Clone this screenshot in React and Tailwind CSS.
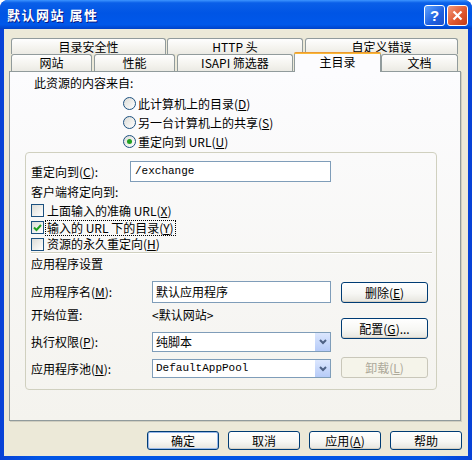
import React from 'react';

function Mn({ children }) {
  // mnemonic letter with underline
  return <span className="underline underline-offset-[1px]">{children}</span>;
}

function XpButton({ children, className = '', disabled }) {
  return (
    <div
      className={`flex items-center justify-center rounded-[3px] border text-[12px] leading-none ${
        disabled
          ? 'border-[#C9C7BA] text-[#ACA899] bg-[#F5F4EA]'
          : 'border-[#003C74] text-black bg-[linear-gradient(180deg,#ffffff_0%,#f7f7f4_55%,#e6e5de_100%)] shadow-[inset_0_-1px_0_#d6d0c5]'
      } ${className}`}
    >
      {children}
    </div>
  );
}

function Radio({ checked, children }) {
  return (
    <div className="flex items-center h-[19px]">
      <span className="w-[13px] h-[13px] rounded-full border border-[#1C5180] bg-[linear-gradient(135deg,#dcdcd7,#ffffff)] flex items-center justify-center">
        {checked && <span className="w-[5px] h-[5px] rounded-full bg-[#21A121]" />}
      </span>
      <span className="ml-[2px]">{children}</span>
    </div>
  );
}

function Check({ checked, focus, children, h = 'h-[17px]' }) {
  return (
    <div className={`flex items-center ${h}`}>
      <span className="w-[13px] h-[13px] border border-[#1C5180] bg-[linear-gradient(135deg,#dcdcd7,#ffffff)] flex items-center justify-center">
        {checked && (
          <svg width="9" height="9" viewBox="0 0 9 9">
            <path d="M1 4.5 L3.5 7 L8 2" fill="none" stroke="#21A121" strokeWidth="2" />
          </svg>
        )}
      </span>
      <span className={`ml-[1px] px-[1px] leading-[14px] border ${focus ? 'border-dotted border-black' : 'border-transparent'}`}>
        {children}
      </span>
    </div>
  );
}

function Select({ children, mono, h = 'h-[19px]' }) {
  return (
    <div className={`w-[179px] ${h} border border-[#7F9DB9] bg-white flex items-center justify-between pl-[3px] pr-[0px]`}>
      <span className={mono ? "font-['Liberation_Mono',monospace] text-[11px]" : ''}>{children}</span>
      <span className="w-[16px] h-full border-l border-white bg-[linear-gradient(180deg,#dce7fe,#b6cbf8)] flex items-center justify-center">
        <svg width="8" height="6" viewBox="0 0 8 6">
          <path d="M1 1 L4 4 L7 1" fill="none" stroke="#4D6185" strokeWidth="2" />
        </svg>
      </span>
    </div>
  );
}

function Tab({ children, w, className = '' }) {
  return (
    <div
      className={`${w} h-full border border-b-0 border-[#919B9C] rounded-t-[3px] bg-[linear-gradient(180deg,#fefefe_0%,#f4f3ee_60%,#ebeae4_100%)] flex items-center justify-center text-[12px] leading-none ${className}`}
    >
      {children}
    </div>
  );
}

export default function App() {
  return (
    <div className="w-[472px] h-[460px] bg-[linear-gradient(90deg,#0841d6,#0055e5_8%,#0055e5_92%,#0841d6)] rounded-t-[8px] flex flex-col overflow-hidden font-['Noto_Sans_CJK_SC','Noto_Sans',sans-serif] text-[12px] text-black">
      {/* Title bar */}
      <div className="h-[29px] flex items-center justify-between pl-[7px] pr-[4px] bg-[linear-gradient(180deg,#3d95ff_0%,#0a5fe8_10%,#0055e5_45%,#0058ea_85%,#0042c8_100%)]">
        <span className="text-white text-[13px] font-bold tracking-[1.5px] [text-shadow:1px_1px_0_#0a1883]">默认网站 属性</span>
        <div className="flex gap-[2px] mb-[-2px]">
          <div className="w-[21px] h-[21px] rounded-[3px] border border-white bg-[linear-gradient(135deg,#5fa3ff,#1d5fe0_60%,#1c4fc9)] flex items-center justify-center text-white text-[15px] font-bold leading-none font-['Liberation_Sans',sans-serif]">
            ?
          </div>
          <div className="w-[21px] h-[21px] rounded-[3px] border border-white bg-[linear-gradient(135deg,#f19a7d,#e0582f_55%,#c43c16)] flex items-center justify-center">
            <svg width="11" height="11" viewBox="0 0 11 11">
              <path d="M1.5 1.5 L9.5 9.5 M9.5 1.5 L1.5 9.5" stroke="#fff" strokeWidth="2.2" />
            </svg>
          </div>
        </div>
      </div>

      {/* Body */}
      <div className="flex-1 mx-[4px] mb-[4px] bg-[#ECE9D8] flex flex-col pt-[9px]">
        <div className="ml-[5px] flex flex-col">
          {/* Tab rows */}
          <div className="flex h-[16px] ml-[2px]">
            <Tab w="w-[155px]">目录安全性</Tab>
            <Tab w="w-[136px]" className="ml-[1px]">HTTP 头</Tab>
            <Tab w="w-[153px]" className="ml-[2px]">自定义错误</Tab>
          </div>
          <div className="flex h-[17px] ml-[2px]">
            <Tab w="w-[81px]">网站</Tab>
            <Tab w="w-[81px]" className="ml-[2px]">性能</Tab>
            <Tab w="w-[116px]" className="ml-[2px]">ISAPI 筛选器</Tab>
            <div className="w-[87px] h-[20px] mt-[-2px] ml-[1px] relative z-10 border-x border-[#919B9C] rounded-t-[3px] bg-[#FCFCFE] flex flex-col">
              <div className="h-[2px] rounded-t-[2px] bg-[linear-gradient(180deg,#e68b2c,#ffc73c)] mx-[-1px]" />
              <div className="flex-1 flex items-center justify-center leading-none pb-[3px]">主目录</div>
            </div>
            <Tab w="w-[77px]">文档</Tab>
          </div>

          {/* Tab page */}
          <div className="w-[452px] h-[350px] border border-[#919B9C] shadow-[1px_1px_0_#d0cec0] bg-[linear-gradient(180deg,#fcfcfe_0%,#f4f3ee_100%)] flex flex-col">
            <div className="pl-[24px] pt-[3px] h-[19px] leading-[16px]">此资源的内容来自:</div>
            <div className="ml-[113px] mt-[3px] flex flex-col">
              <Radio>此计算机上的目录(<Mn>D</Mn>)</Radio>
              <Radio>另一台计算机上的共享(<Mn>S</Mn>)</Radio>
              <Radio checked>重定向到 URL(<Mn>U</Mn>)</Radio>
            </div>

            {/* Group box */}
            <div className="ml-[15px] mt-[1px] w-[412px] h-[238px] border border-[#D0D0BF] rounded-[4px] pl-[5px] pt-[8px] flex flex-col">
              <div className="flex items-center h-[21px]">
                <span className="w-[99px]">重定向到(<Mn>C</Mn>):</span>
                <div className="w-[201px] h-full border border-[#7F9DB9] bg-white flex items-center pl-[4px] font-['Liberation_Mono',monospace] text-[11px]">
                  /exchange
                </div>
              </div>
              <div className="mt-[2px] h-[16px] leading-[16px]">客户端将定向到:</div>
              <div className="mt-[2px] flex flex-col">
                <Check>上面输入的准确 URL(<Mn>X</Mn>)</Check>
                <Check checked focus>输入的 URL 下的目录(<Mn>Y</Mn>)</Check>
                <Check h="h-[16px]">资源的永久重定向(<Mn>H</Mn>)</Check>
              </div>
              <div className="h-[1px] w-[401px] bg-[#D0D0BF] border-b border-white box-content" />
              <div className="mt-[2px] h-[16px] leading-[16px]">应用程序设置</div>

              <div className="mt-[9px] flex">
                <div className="flex flex-col">
                  <div className="flex items-center h-[22px]">
                    <span className="w-[121px]">应用程序名(<Mn>M</Mn>):</span>
                    <div className="w-[179px] h-full border border-[#7F9DB9] bg-white flex items-center pl-[3px]">默认应用程序</div>
                  </div>
                  <div className="flex items-center h-[24px]">
                    <span className="w-[121px]">开始位置:</span>
                    <span>&lt;默认网站&gt;</span>
                  </div>
                  <div className="flex items-center mt-[5px]">
                    <span className="w-[121px]">执行权限(<Mn>P</Mn>):</span>
                    <Select h="h-[20px]">纯脚本</Select>
                  </div>
                  <div className="flex items-center mt-[7px]">
                    <span className="w-[121px]">应用程序池(<Mn>N</Mn>):</span>
                    <Select mono>DefaultAppPool</Select>
                  </div>
                </div>
                <div className="ml-[10px] mt-[1px] flex flex-col">
                  <XpButton className="w-[87px] h-[21px]">删除(<Mn>E</Mn>)</XpButton>
                  <XpButton className="w-[87px] h-[21px] mt-[15px]">配置(<Mn>G</Mn>)...</XpButton>
                  <XpButton disabled className="w-[87px] h-[21px] mt-[18px]">卸载(<Mn>L</Mn>)</XpButton>
                </div>
              </div>
            </div>
          </div>
        </div>

        {/* Dialog buttons */}
        <div className="mt-[10px] flex justify-end gap-[9px] pr-[6px]">
          <XpButton className="w-[72px] h-[19px] shadow-[inset_0_0_0_1px_#98b8ea]">确定</XpButton>
          <XpButton className="w-[72px] h-[19px]">取消</XpButton>
          <XpButton className="w-[72px] h-[19px]">应用(<Mn>A</Mn>)</XpButton>
          <XpButton className="w-[72px] h-[19px]">帮助</XpButton>
        </div>
      </div>
    </div>
  );
}
